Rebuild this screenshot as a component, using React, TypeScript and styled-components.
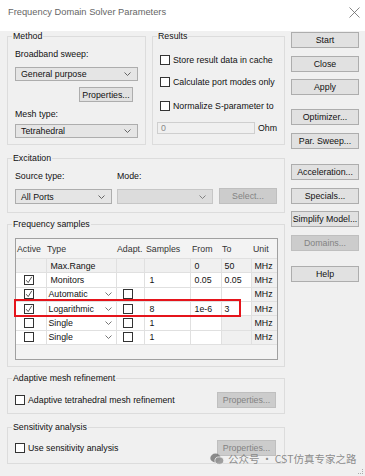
import React from 'react';
import styled, { createGlobalStyle } from 'styled-components';

const GlobalStyle = createGlobalStyle`
  html, body {
    margin: 0;
    padding: 0;
    background: #f0f0f0;
  }
  body {
    font-family: "Liberation Sans", Arial, sans-serif;
    font-size: 8.8px;
    color: #111;
  }
`;

const Window = styled.div`
  position: relative;
  width: 365px;
  height: 476px;
  overflow: hidden;
  background: #f0f0f0;
`;

const TitleBar = styled.div`
  height: 31px;
  background: #fff;
  display: flex;
  align-items: center;
  justify-content: space-between;
  padding: 0 5px 7px 8px;
  box-sizing: border-box;
`;

const Title = styled.div`
  font-size: 9.3px;
  color: #666;
`;

const Body = styled.div`
  display: flex;
  gap: 6px;
  padding-left: 7px;
`;

const MainColumn = styled.div`
  width: 278px;
  display: flex;
  flex-direction: column;
`;

const TopRow = styled.div`
  display: flex;
  gap: 6px;
`;

const Group = styled.fieldset<{ $w?: number; $mt?: number; $pt: number; $pb: number }>`
  margin: ${({ $mt }) => $mt ?? 0}px 0 0 0;
  width: ${({ $w }) => ($w ? `${$w}px` : 'auto')};
  box-sizing: border-box;
  min-width: 0;
  border: 1px solid #dcdcdc;
  padding: ${({ $pt }) => $pt}px 7px ${({ $pb }) => $pb}px 7px;
  display: flex;
  flex-direction: column;
`;

const Legend = styled.legend`
  line-height: 11px;
  padding: 0 1px;
  margin-left: -3px;
`;

const FieldLabel = styled.div<{ $mt?: number }>`
  line-height: 11px;
  margin-top: ${({ $mt }) => $mt ?? 0}px;
`;

const Combo = styled.div<{ $w?: number; $h?: number; $mt?: number; $disabled?: boolean }>`
  width: ${({ $w }) => ($w ? `${$w}px` : 'auto')};
  height: ${({ $h }) => $h ?? 14}px;
  margin-top: ${({ $mt }) => $mt ?? 0}px;
  box-sizing: border-box;
  background: ${({ $disabled }) => ($disabled ? '#dcdcdc' : '#e5e5e5')};
  border: 1px solid ${({ $disabled }) => ($disabled ? '#c6c6c6' : '#adadad')};
  display: flex;
  align-items: center;
  justify-content: space-between;
  padding: 0 6px 0 5px;
`;

const Button = styled.div<{ $w?: number; $h?: number; $mt?: number; $disabled?: boolean }>`
  width: ${({ $w }) => ($w ? `${$w}px` : '100%')};
  height: ${({ $h }) => $h ?? 16}px;
  margin-top: ${({ $mt }) => $mt ?? 0}px;
  box-sizing: border-box;
  background: ${({ $disabled }) => ($disabled ? '#cccccc' : '#e1e1e1')};
  border: 1px solid ${({ $disabled }) => ($disabled ? '#bfbfbf' : '#adadad')};
  color: ${({ $disabled }) => ($disabled ? '#838383' : '#111')};
  display: flex;
  align-items: center;
  justify-content: center;
  white-space: nowrap;
`;

const RightAlign = styled.div`
  display: flex;
  justify-content: flex-end;
  padding-right: 5px;
`;

const CheckRow = styled.label<{ $mt?: number }>`
  display: flex;
  align-items: center;
  gap: 3px;
  height: 10px;
  margin-top: ${({ $mt }) => $mt ?? 0}px;
  white-space: nowrap;
`;

const Box = styled.span`
  width: 10px;
  height: 10px;
  box-sizing: border-box;
  border: 1px solid #333;
  background: #fff;
  display: inline-flex;
  align-items: center;
  justify-content: center;
  flex: none;
`;

const OhmRow = styled.div`
  display: flex;
  align-items: center;
  gap: 3px;
  margin-top: 11px;
  margin-left: -3px;
`;

const TextField = styled.div`
  width: 99px;
  height: 12px;
  box-sizing: border-box;
  border: 1px solid #cfcfcf;
  background: #f0f0f0;
  color: #8a8a8a;
  line-height: 10px;
  padding-left: 3px;
`;

const ExcitationGrid = styled.div`
  display: grid;
  grid-template-columns: 97px 96px 59px;
  column-gap: 5px;
  row-gap: 6px;
  align-items: end;
`;

const SelectCell = styled.div`
  margin-left: 1px;
`;

const TableBox = styled.div`
  position: relative;
  width: 263px;
  height: 122px;
  box-sizing: border-box;
  border: 1px solid #a0a0a0;
  background: #f3f3f3;
`;

const Grid = styled.table`
  border-collapse: collapse;
  table-layout: fixed;
  width: 261px;
`;

const HeadCell = styled.th<{ $pl?: number }>`
  height: 19px;
  padding: 0 0 0 ${({ $pl }) => $pl ?? 1}px;
  font-weight: normal;
  text-align: left;
  color: #333;
  white-space: nowrap;
  overflow: visible;
`;

const Cell = styled.td<{ $white?: boolean; $pl?: number }>`
  height: 14.33px;
  box-sizing: border-box;
  padding: 0 0 0 ${({ $pl }) => $pl ?? 4}px;
  border: 1px solid #e0e0e0;
  background: ${({ $white }) => ($white ? '#fff' : '#f0f0f0')};
  white-space: nowrap;
  line-height: 12px;
  &:first-child { border-left: none; }
  &:last-child { border-right: none; }
`;

const CellInner = styled.div`
  display: flex;
  align-items: center;
  justify-content: space-between;
  padding-right: 4px;
`;

const CenterBox = styled.div`
  display: flex;
  justify-content: center;
  padding-right: 4px;
`;

const Highlight = styled.div`
  position: absolute;
  left: -2px;
  top: 60px;
  width: 227px;
  height: 18px;
  box-sizing: border-box;
  border: 2px solid #e5141b;
`;

const OptionRow = styled.div`
  display: flex;
  align-items: center;
  justify-content: space-between;
  height: 16px;
  padding-right: 1px;
`;

const ButtonColumn = styled.div`
  width: 68px;
  display: flex;
  flex-direction: column;
  gap: 7.5px;
  padding-top: 1px;
`;

const Watermark = styled.div`
  position: absolute;
  left: 210px;
  top: 451px;
  display: flex;
  align-items: center;
  gap: 4px;
  font-family: "Noto Sans CJK SC", "Liberation Sans", sans-serif;
  font-size: 10.5px;
  color: rgba(120, 120, 120, 0.85);
  white-space: nowrap;
`;

const Grip = styled.div`
  position: absolute;
  right: 2px;
  bottom: 2px;
  width: 4px;
  height: 4px;
  border-right: 1px dotted #aaa;
  border-bottom: 1px dotted #aaa;
`;

function Chevron({ color = '#555' }: { color?: string }) {
  return (
    <svg width="7" height="4" viewBox="0 0 7 4">
      <polyline points="0.5,0.5 3.5,3.5 6.5,0.5" fill="none" stroke={color} strokeWidth="0.9" />
    </svg>
  );
}

function Check({ checked }: { checked?: boolean }) {
  return (
    <Box>
      {checked && (
        <svg width="8" height="8" viewBox="0 0 8 8">
          <polyline points="1.2,4.2 3.2,6.6 6.8,0.8" fill="none" stroke="#444" strokeWidth="0.9" />
        </svg>
      )}
    </Box>
  );
}

function CloseIcon() {
  return (
    <svg width="11" height="11" viewBox="0 0 11 11">
      <path d="M0.5 0.5 L10.5 10.5 M10.5 0.5 L0.5 10.5" stroke="#666" strokeWidth="0.8" />
    </svg>
  );
}

function WeChatIcon() {
  return (
    <svg width="14" height="12" viewBox="0 0 14 12">
      <ellipse cx="5.5" cy="5" rx="5.2" ry="4.4" fill="rgba(120,120,120,0.85)" />
      <ellipse cx="9.3" cy="7.6" rx="4.4" ry="3.7" fill="rgba(150,150,150,0.9)" stroke="#f0f0f0" strokeWidth="0.8" />
    </svg>
  );
}

type Row = {
  active: 'none' | 'on' | 'off';
  type: string;
  dropdown?: boolean;
  adapt?: boolean;
  samples: string;
  from: string;
  to: string;
  white: [boolean, boolean, boolean, boolean, boolean, boolean];
};

const rows: Row[] = [
  { active: 'none', type: 'Max.Range', samples: '', from: '0', to: '50', white: [false, false, false, false, false, false] },
  { active: 'on', type: 'Monitors', samples: '1', from: '0.05', to: '0.05', white: [true, true, true, true, true, true] },
  { active: 'on', type: 'Automatic', dropdown: true, adapt: true, samples: '', from: '', to: '', white: [true, true, true, true, true, true] },
  { active: 'on', type: 'Logarithmic', dropdown: true, adapt: true, samples: '8', from: '1e-6', to: '3', white: [true, true, true, true, true, true] },
  { active: 'off', type: 'Single', dropdown: true, adapt: true, samples: '1', from: '', to: '', white: [true, true, true, true, true, false] },
  { active: 'off', type: 'Single', dropdown: true, adapt: true, samples: '1', from: '', to: '', white: [true, true, true, true, true, false] },
];

function SamplesTable() {
  return (
    <TableBox>
      <Grid>
        <colgroup>
          <col style={{ width: 30 }} />
          <col style={{ width: 70 }} />
          <col style={{ width: 28 }} />
          <col style={{ width: 46 }} />
          <col style={{ width: 31 }} />
          <col style={{ width: 30 }} />
          <col style={{ width: 26 }} />
        </colgroup>
        <thead>
          <tr>
            <HeadCell>Active</HeadCell>
            <HeadCell>Type</HeadCell>
            <HeadCell>Adapt.</HeadCell>
            <HeadCell $pl={2}>Samples</HeadCell>
            <HeadCell $pl={2}>From</HeadCell>
            <HeadCell>To</HeadCell>
            <HeadCell $pl={2}>Unit</HeadCell>
          </tr>
        </thead>
        <tbody>
          {rows.map((r, i) => (
            <tr key={i}>
              <Cell $white={r.white[0]} $pl={0}>
                {r.active !== 'none' && (
                  <CenterBox>
                    <Check checked={r.active === 'on'} />
                  </CenterBox>
                )}
              </Cell>
              <Cell $white={r.white[1]} $pl={r.dropdown ? 2 : 4}>
                {r.dropdown ? (
                  <CellInner>
                    <span>{r.type}</span>
                    <Chevron color="#666" />
                  </CellInner>
                ) : (
                  r.type
                )}
              </Cell>
              <Cell $white={r.white[2]} $pl={0}>
                {r.adapt && (
                  <CenterBox>
                    <Check />
                  </CenterBox>
                )}
              </Cell>
              <Cell $white={r.white[3]} $pl={5}>{r.samples}</Cell>
              <Cell $white={r.white[4]}>{r.from}</Cell>
              <Cell $white={r.white[5]} $pl={3}>{r.to}</Cell>
              <Cell $pl={3}>MHz</Cell>
            </tr>
          ))}
        </tbody>
      </Grid>
      <Highlight />
    </TableBox>
  );
}

export default function App() {
  return (
    <Window>
      <GlobalStyle />
      <TitleBar>
        <Title>Frequency Domain Solver Parameters</Title>
        <CloseIcon />
      </TitleBar>
      <Body>
        <MainColumn>
          <TopRow>
            <Group $w={139} $pt={7} $pb={5}>
              <Legend>Method</Legend>
              <FieldLabel>Broadband sweep:</FieldLabel>
              <Combo $mt={7}>
                <span>General purpose</span>
                <Chevron />
              </Combo>
              <RightAlign>
                <Button $w={54} $h={15} $mt={6}>Properties...</Button>
              </RightAlign>
              <FieldLabel $mt={7}>Mesh type:</FieldLabel>
              <Combo $mt={4}>
                <span>Tetrahedral</span>
                <Chevron />
              </Combo>
            </Group>
            <Group $w={133} $pt={13} $pb={10}>
              <Legend>Results</Legend>
              <CheckRow>
                <Check />
                Store result data in cache
              </CheckRow>
              <CheckRow $mt={12}>
                <Check />
                Calculate port modes only
              </CheckRow>
              <CheckRow $mt={14}>
                <Check />
                Normalize S-parameter to
              </CheckRow>
              <OhmRow>
                <TextField>0</TextField>
                <span>Ohm</span>
              </OhmRow>
            </Group>
          </TopRow>

          <Group $mt={8} $pt={7} $pb={8}>
            <Legend>Excitation</Legend>
            <ExcitationGrid>
              <FieldLabel>Source type:</FieldLabel>
              <FieldLabel>Mode:</FieldLabel>
              <span />
              <Combo $h={15}>
                <span>All Ports</span>
                <Chevron />
              </Combo>
              <Combo $h={15} $disabled>
                <span />
                <Chevron color="#777" />
              </Combo>
              <SelectCell>
                <Button $h={16} $disabled>Select...</Button>
              </SelectCell>
            </ExcitationGrid>
          </Group>

          <Group $mt={6} $pt={8} $pb={6}>
            <Legend>Frequency samples</Legend>
            <SamplesTable />
          </Group>

          <Group $mt={6} $pt={8} $pb={5}>
            <Legend>Adaptive mesh refinement</Legend>
            <OptionRow>
              <CheckRow>
                <Check />
                Adaptive tetrahedral mesh refinement
              </CheckRow>
              <Button $w={59} $disabled>Properties...</Button>
            </OptionRow>
          </Group>

          <Group $mt={8} $pt={7} $pb={7}>
            <Legend>Sensitivity analysis</Legend>
            <OptionRow>
              <CheckRow>
                <Check />
                Use sensitivity analysis
              </CheckRow>
              <Button $w={59} $disabled>Properties...</Button>
            </OptionRow>
          </Group>
        </MainColumn>

        <ButtonColumn>
          <Button>Start</Button>
          <Button>Close</Button>
          <Button>Apply</Button>
          <Button $mt={6.5}>Optimizer...</Button>
          <Button>Par. Sweep...</Button>
          <Button $mt={8}>Acceleration...</Button>
          <Button>Specials...</Button>
          <Button>Simplify Model...</Button>
          <Button $disabled>Domains...</Button>
          <Button $mt={8}>Help</Button>
        </ButtonColumn>
      </Body>
      <Watermark>
        <WeChatIcon />
        <span>公众号 · CST仿真专家之路</span>
      </Watermark>
      <Grip />
    </Window>
  );
}
